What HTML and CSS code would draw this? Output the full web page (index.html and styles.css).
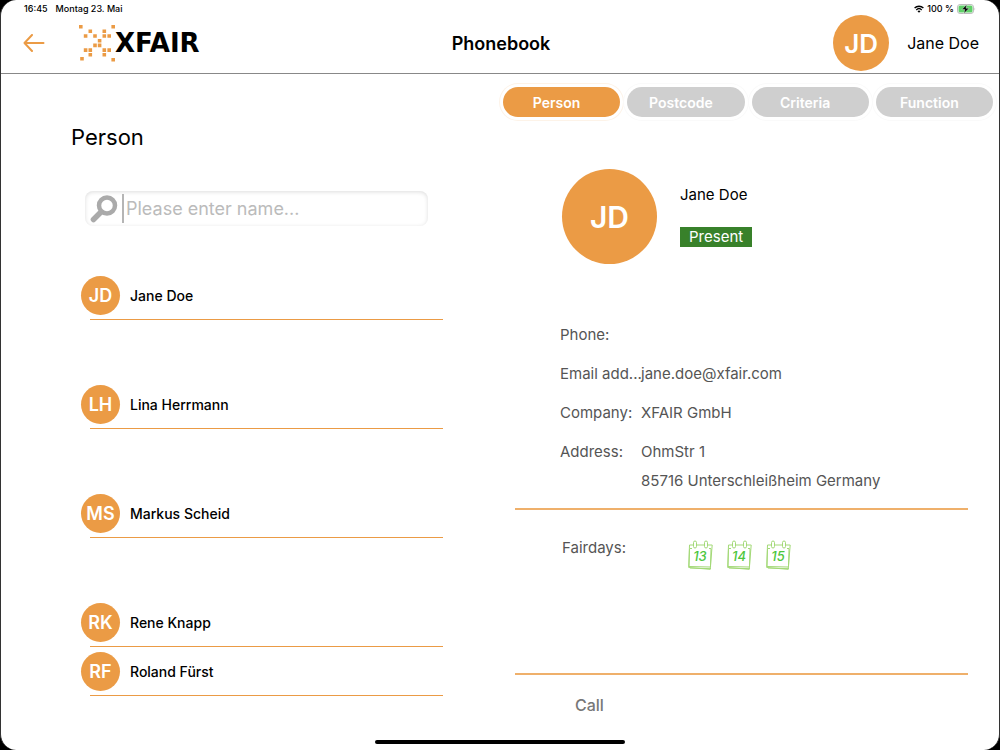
FILE: index.html
```html
<!DOCTYPE html>
<html lang="en">

<head>
  <meta charset="UTF-8" />
  <meta name="viewport" content="width=device-width, initial-scale=1.0" />
  <title>Phonebook</title>
  <link rel="stylesheet" href="styles.css">
</head>

<body>
  <div class="screen">
    <div class="status-bar">
      <span>16:45</span>
      <span>Montag 23. Mai</span>
      <span class="status-right">
        <svg width="10" height="8" viewBox="0 0 10 8" fill="none" stroke="#000" stroke-width="1.4">
          <path d="M.6 3.1a6.3 6.3 0 0 1 8.8 0M2.3 4.9a3.9 3.9 0 0 1 5.4 0" />
          <path d="M5 7.8 3.5 6.3a2.2 2.2 0 0 1 3 0z" fill="#000" stroke="none" />
        </svg>
        100 %
        <svg width="19" height="10" viewBox="0 0 19 10">
          <rect x=".5" y=".5" width="16" height="9" rx="2.6" fill="#fff" stroke="#bbb" />
          <rect x="1.500" y="1.500" width="14" height="7" rx="1.5" fill="#5fd068" />
          <path d="M17.6 3.5q1.2 1.5 0 3z" fill="#aaa" />
          <path d="M9.8.4 4.8 5.6h3L6.900 9.600l5.200-5.400H9z" fill="#000" stroke="#fff" stroke-width=".4" />
        </svg>
      </span>
    </div>

    <header class="header">
      <div class="header-left">
        <button class="back-btn" aria-label="Back">
          <svg width="22" height="18" viewBox="0 0 22 18" fill="none" stroke="#eb9b45" stroke-width="2" stroke-linecap="round" stroke-linejoin="round">
            <path d="M9 1 1.500 9 9 17M1.500 9h19" />
          </svg>
        </button>
        <div class="logo">
          <svg width="36" height="38" viewBox="0 0 36 38" fill="#eb9b45">
            <path d="M0 1h3.6v3.6H0zM32.400 1h3.6v3.6h-3.600zM9.500 5.500h3.600v3.600H9.500zM23.500 5.500h3.600v3.600h-3.600zM4.800 10.200h3.600v3.600H4.800zM14.200 10.200h3.600v3.600h-3.600zM23.500 10.200h3.600v3.600h-3.600zM28.400 10.200H32v3.600h-3.600zM18.800 15h3.600v3.600h-3.600zM14.200 19.600h3.600v3.600h-3.600zM18.800 19.600h3.600v3.600h-3.600zM4.800 24.300h3.600v3.600H4.800zM9.500 24.300h3.600v3.600H9.500zM23.500 24.300h3.600v3.600h-3.600zM28.400 24.300H32v3.600h-3.600zM9.500 29h3.600v3.600H9.500zM23.500 29h3.600v3.600h-3.600zM1.200 33h3.600v3.600H1.200zM32.400 34h3.600v3.600h-3.600z" />
          </svg>
          <span>XFAIR</span>
        </div>
      </div>
      <h1>Phonebook</h1>
      <div class="header-user">
        <span class="avatar avatar-md">JD</span>
        <span>Jane Doe</span>
      </div>
    </header>

    <main class="content">
      <section class="people">
        <h2>Person</h2>
        <label class="search">
          <svg width="28" height="28" viewBox="0 0 28 28" fill="none" stroke="#aaa" stroke-linecap="round">
            <circle cx="17" cy="10.500" r="8" stroke-width="4.500" />
            <path d="m10.500 17.500-7 7" stroke-width="5.500" />
          </svg>
          <input type="text" placeholder="Please enter name..." aria-label="Name" />
        </label>

        <ul class="group">
          <li class="person"><span class="avatar avatar-sm">JD</span><span>Jane Doe</span></li>
        </ul>
        <ul class="group">
          <li class="person"><span class="avatar avatar-sm">LH</span><span>Lina Herrmann</span></li>
        </ul>
        <ul class="group">
          <li class="person"><span class="avatar avatar-sm">MS</span><span>Markus Scheid</span></li>
        </ul>
        <ul class="group">
          <li class="person"><span class="avatar avatar-sm">RK</span><span>Rene Knapp</span></li>
          <li class="person"><span class="avatar avatar-sm">RF</span><span>Roland Fürst</span></li>
        </ul>
      </section>

      <section class="detail">
        <nav class="tabs">
          <button class="tab active">Person</button>
          <button class="tab">Postcode</button>
          <button class="tab">Criteria</button>
          <button class="tab">Function</button>
        </nav>

        <div class="card">
          <div class="profile">
            <span class="avatar avatar-lg">JD</span>
            <div class="profile-text">
              <span>Jane Doe</span>
              <span class="badge">Present</span>
            </div>
          </div>

          <dl class="info">
            <dt>Phone:</dt>
            <dd></dd>
            <dt>Email add...</dt>
            <dd>jane.doe@xfair.com</dd>
            <dt>Company:</dt>
            <dd>XFAIR GmbH</dd>
            <dt>Address:</dt>
            <dd>OhmStr 1<br>85716 Unterschleißheim Germany</dd>
          </dl>

          <div class="fairdays">
            <span class="fairdays-label">Fairdays:</span>
            <svg class="day" viewBox="0 0 25 30">
              <use href="#calendar" />
              <text x="12" y="21">13</text>
            </svg>
            <svg class="day" viewBox="0 0 25 30">
              <use href="#calendar" />
              <text x="12" y="21">14</text>
            </svg>
            <svg class="day" viewBox="0 0 25 30">
              <use href="#calendar" />
              <text x="12" y="21">15</text>
            </svg>
          </div>

          <button class="call-btn">Call</button>
        </div>
      </section>
    </main>

    <div class="home-indicator"></div>
  </div>

  <svg class="sprite" width="0" height="0">
    <symbol id="calendar" viewBox="0 0 25 30">
      <g fill="none" stroke="#a3d977" stroke-width="1">
        <path d="M5 5H1.500L.7 27.500l21.500 1.800L24.200 5H20M9 5h7M1.500 9l-.5 17.500 21.500.5L23 9M2 28l21 .7" />
        <path d="M2 8.500h2M21 8.500h2" />
        <rect x="5.500" y="1" width="3" height="7" rx="1.500" />
        <rect x="16.500" y="1" width="3" height="7" rx="1.500" />
      </g>
    </symbol>
  </svg>
</body>

</html>
```
FILE: styles.css
```css
* {
  box-sizing: border-box;
}

body {
  margin: 0;
  background-color: #000;
  font-family: Inter, "Liberation Sans", sans-serif;
  font-size: 15px;
  color: #000;
}

h1,
h2,
ul,
dl,
dd {
  margin: 0;
  padding: 0;
}

button {
  border: 0;
  padding: 0;
  background: none;
  font-family: inherit;
  cursor: pointer;
}

.screen {
  display: flex;
  flex-direction: column;
  min-height: 100vh;
  border: solid #333;
  border-width: 0 1px;
  border-radius: 16px;
  background-color: #fff;
}

.status-bar {
  display: flex;
  gap: 8px;
  padding: 3px 23px 0;
  font-size: 9px;
  line-height: 12px;
  font-weight: 500;
}

.status-right {
  display: flex;
  align-items: center;
  gap: 3px;
  margin-left: auto;
}

.header {
  display: grid;
  grid-template-columns: 1fr auto 1fr;
  align-items: center;
  height: 59px;
  padding: 0 20px 2px 22px;
  border-bottom: 1px solid #888;
}

.header-left {
  display: flex;
  align-items: center;
  gap: 34px;
}

.back-btn {
  display: flex;
}

.logo {
  display: flex;
  align-items: center;
  font-family: "DejaVu Sans", sans-serif;
  font-size: 26px;
  font-weight: bold;
}

h1 {
  font-size: 18px;
  font-weight: 600;
}

.header-user {
  display: flex;
  align-items: center;
  justify-content: flex-end;
  gap: 18px;
  font-size: 16px;
}

.avatar {
  display: flex;
  align-items: center;
  justify-content: center;
  flex: none;
  border-radius: 50%;
  background-color: #eb9b45;
  color: #fff;
  font-weight: 600;
}

.avatar-sm {
  width: 39px;
  height: 39px;
  font-size: 18px;
}

.avatar-md {
  width: 56px;
  height: 56px;
  font-size: 26px;
}

.avatar-lg {
  width: 95px;
  height: 95px;
  font-size: 30px;
}

.content {
  flex: 1;
  display: grid;
  grid-template-columns: 1fr 1fr;
}

.people {
  padding: 48px 57px 0 70px;
}

h2 {
  font-size: 22px;
  line-height: 30px;
  font-weight: 400;
}

.search {
  display: flex;
  align-items: center;
  gap: 4px;
  height: 35px;
  margin: 39px 15px 0 14px;
  padding: 0 5px;
  border-radius: 8px;
  box-shadow: inset 0 1px 4px #ddd;
}

.search input {
  flex: 1;
  min-width: 0;
  height: 29px;
  padding: 0 2px;
  border: 0;
  border-left: 2px solid #b5b5b5;
  outline: 0;
  background: none;
  font-family: inherit;
  font-size: 18px;
}

.search input::placeholder {
  color: #bbb;
}

.group {
  margin-left: 10px;
  padding-top: 60px;
  list-style: none;
}

.search + .group {
  padding-top: 45px;
}

.person {
  display: flex;
  align-items: center;
  gap: 10px;
  height: 49px;
  font-size: 14px;
  font-weight: 500;
  background: linear-gradient(#eb9b45, #eb9b45) 9px 100% / 100% 1px no-repeat;
}

.tabs {
  display: flex;
  gap: 7px;
  padding: 13px 6px 0 3px;
}

.tab {
  flex: 1;
  height: 30px;
  padding-right: 10px;
  border-radius: 15px;
  background-color: #cfcfcf;
  box-shadow: 0 0 0 3px #fff, 0 0 0 4px #fafafa;
  color: #fff;
  font-size: 14px;
  font-weight: 600;
}

.tab.active {
  background-color: #eb9b45;
  box-shadow: 0 0 0 3px #fff, 0 0 0 4px #fdf3e8;
}

.card {
  padding: 52px 31px 0 15px;
}

.profile {
  display: flex;
  gap: 23px;
  padding-left: 47px;
}

.profile-text {
  display: flex;
  flex-direction: column;
  align-items: flex-start;
  gap: 22px;
  padding-top: 16px;
  line-height: 20px;
}

.badge {
  padding: 0 9px;
  background-color: #38812a;
  color: #fff;
}

.info {
  display: grid;
  grid-template-columns: 81px 1fr;
  row-gap: 10px;
  padding: 56px 0 13px 45px;
  border-bottom: 2px solid #efb06b;
  color: #555;
  line-height: 29px;
}

.info dt {
  white-space: nowrap;
}

.fairdays {
  display: flex;
  gap: 14px;
  height: 165px;
  padding: 30px 0 0 47px;
  border-bottom: 2px solid #efb06b;
  color: #555;
}

.fairdays-label {
  width: 112px;
  line-height: 15px;
}

.day {
  width: 25px;
  height: 30px;
  fill: #4cc63c;
  font-size: 13px;
  font-style: italic;
  font-weight: 500;
  text-anchor: middle;
}

.call-btn {
  margin: 20px 0 0 60px;
  color: #777;
  font-size: 16px;
  line-height: 20px;
  font-weight: 500;
}

.home-indicator {
  width: 25%;
  height: 4px;
  margin: 0 auto 6px;
  border-radius: 2px;
  background-color: #000;
}

.sprite {
  position: absolute;
}
```
